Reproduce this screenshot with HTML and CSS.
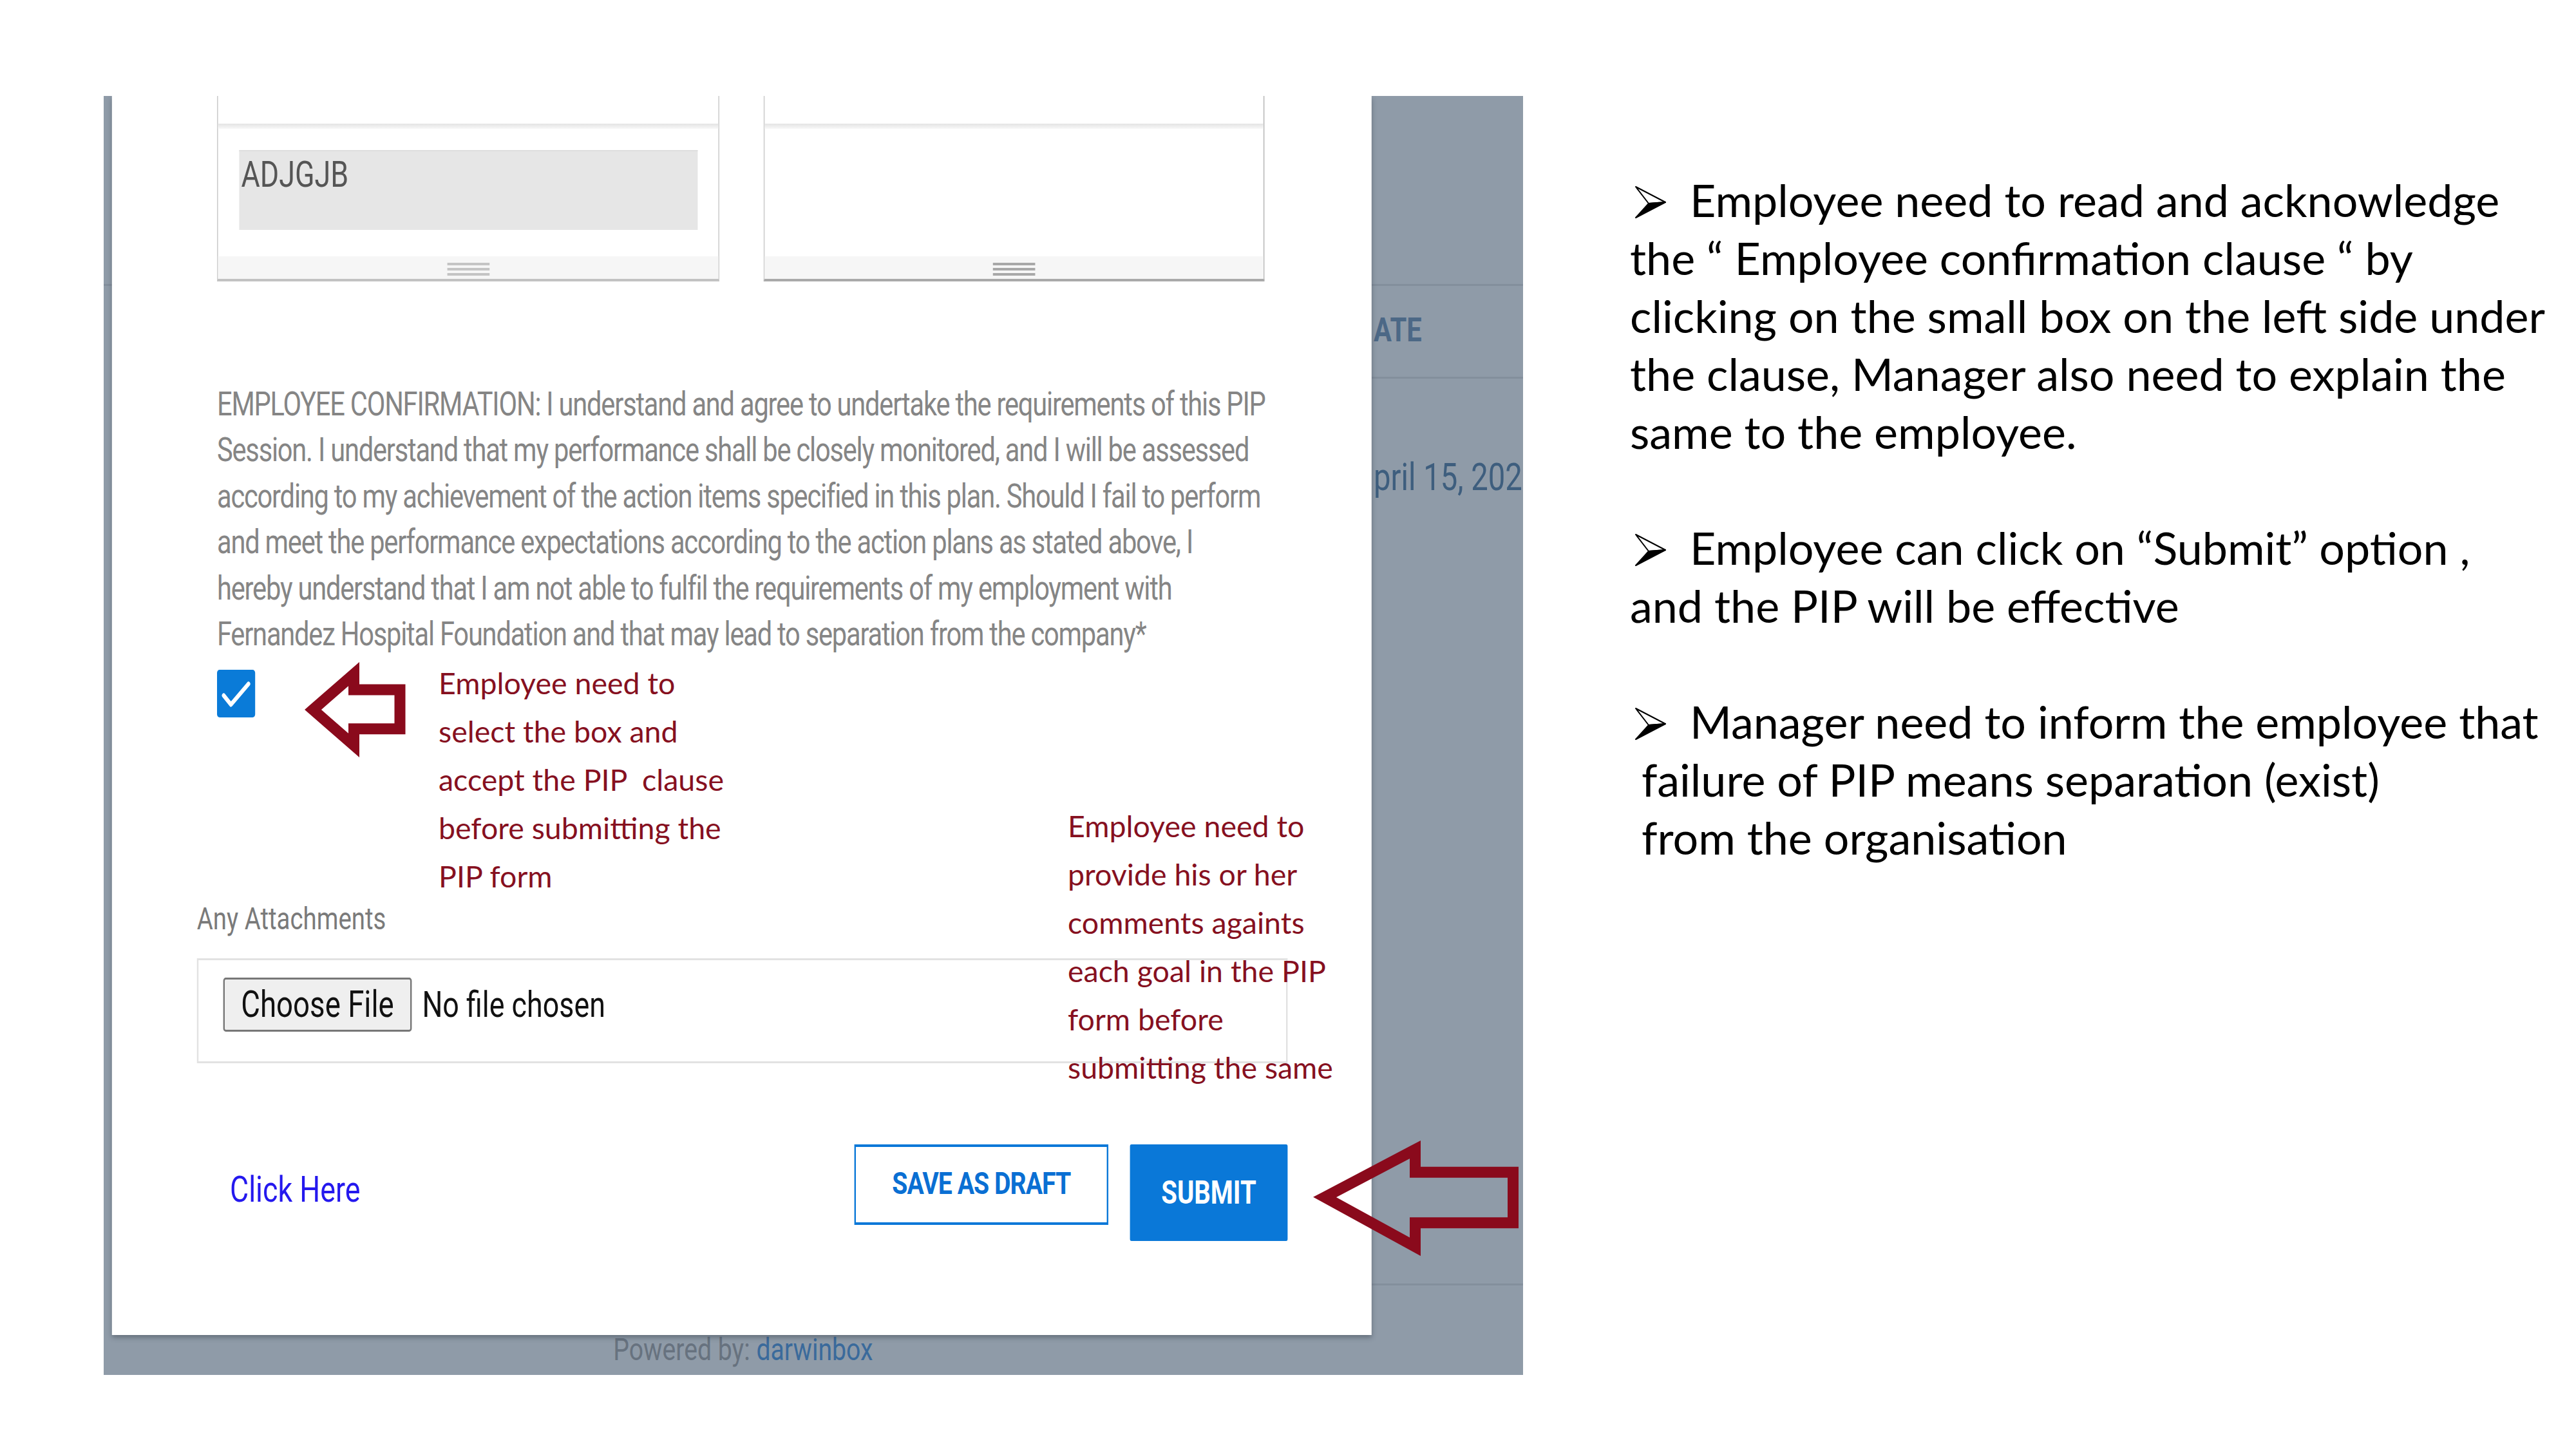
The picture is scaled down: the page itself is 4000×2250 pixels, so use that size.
FILE: index.html
```html
<!DOCTYPE html>
<html lang="en">
<head>
<meta charset="utf-8">
<title>PIP confirmation</title>
<link rel="stylesheet" href="styles.css">
</head>
<body>
<div class="slide">
  <div class="shot-frame">
    <div class="shot">
      <div class="strip"><div class="strip-line"></div></div>
      <div class="modal">
        <div class="areas">
          <div class="area">
            <div class="area-head"></div>
            <div class="area-band"></div>
            <div class="area-body"><div class="input">ADJGJB</div></div>
            <div class="grip"><span></span><span></span><span></span></div>
          </div>
          <div class="area area-2">
            <div class="area-head"></div>
            <div class="area-band"></div>
            <div class="area-body"></div>
            <div class="grip"><span></span><span></span><span></span></div>
          </div>
        </div>
        <p class="confirm">EMPLOYEE CONFIRMATION: I understand and agree to undertake the requirements of this PIP<br>Session. I understand that my performance shall be closely monitored, and I will be assessed<br>according to my achievement of the action items specified in this plan. Should I fail to perform<br>and meet the performance expectations according to the action plans as stated above, I<br>hereby understand that I am not able to fulfil the requirements of my employment with<br>Fernandez Hospital Foundation and that may lead to separation from the company*</p>
        <div class="check"><svg viewBox="0 0 74 74"><polyline points="13,40 27,54 61,22" fill="none" stroke="#fff" stroke-width="7" stroke-linecap="round" stroke-linejoin="round"/></svg></div>
        <div class="label">Any Attachments</div>
        <div class="filebox"><span class="choose">Choose File</span><span class="nofile">No file chosen</span></div>
        <div class="actions">
          <a class="link" href="#">Click Here</a>
          <span class="btn-draft">SAVE AS DRAFT</span>
          <span class="btn-submit">SUBMIT</span>
        </div>
      </div>
      <div class="side">
        <div class="th">ATE</div>
        <div class="td">pril 15, 2021</div>
      </div>
      <div class="footer">Powered by: <span>darwinbox</span></div>
    </div>
  </div>

  <div class="notes">
    <p><svg class="bullet" viewBox="0 0 48 50"><polygon points="1,1 47,25 21,27" fill="#fff" stroke="#000" stroke-width="2" stroke-linejoin="round"/><polygon points="21,27 47,25 1,49" fill="#000" stroke="#000" stroke-width="2" stroke-linejoin="round"/></svg>Employee need to read and acknowledge<br>the “ Employee confirmation clause “ by<br>clicking on the small box on the left side under<br>the clause, Manager also need to explain the<br>same to the employee.</p>
    <p><svg class="bullet" viewBox="0 0 48 50"><polygon points="1,1 47,25 21,27" fill="#fff" stroke="#000" stroke-width="2" stroke-linejoin="round"/><polygon points="21,27 47,25 1,49" fill="#000" stroke="#000" stroke-width="2" stroke-linejoin="round"/></svg>Employee can click on “Submit” option ,<br>and the PIP will be effective</p>
    <p><svg class="bullet" viewBox="0 0 48 50"><polygon points="1,1 47,25 21,27" fill="#fff" stroke="#000" stroke-width="2" stroke-linejoin="round"/><polygon points="21,27 47,25 1,49" fill="#000" stroke="#000" stroke-width="2" stroke-linejoin="round"/></svg>Manager need to inform the employee that<br>&nbsp;failure of PIP means separation (exist)<br>&nbsp;from the organisation</p>
  </div>

  <div class="ann ann-1">Employee need to<br>select the box and<br>accept the PIP&nbsp; clause<br>before submitting the<br>PIP form</div>
  <div class="ann ann-2">Employee need to<br>provide his or her<br>comments againts<br>each goal in the PIP<br>form before<br>submitting the same</div>

  <svg class="overlay" viewBox="0 0 4000 2250">
    <polygon points="486,1102 549.5,1046.7 549.5,1071 621,1071 621,1131.7 549.5,1131.7 549.5,1157.3" fill="none" stroke="#8a0a1c" stroke-width="17" stroke-linejoin="miter"/>
    <polygon points="2057,1859 2197.5,1785 2197.5,1820.3 2349.5,1820.3 2349.5,1898.8 2197.5,1898.8 2197.5,1936" fill="none" stroke="#8a0a1c" stroke-width="17" stroke-linejoin="miter"/>
  </svg>
</div>
</body>
</html>
```

FILE: styles.css
```css
* { box-sizing: border-box; }
html, body { margin: 0; padding: 0; background: #fff; }
body {
  width: 4000px;
  height: 2250px;
  overflow: hidden;
  font-family: Lato, "Liberation Sans", sans-serif;
}
.slide {
  position: relative;
  width: 4000px;
  height: 2250px;
  display: flex;
  align-items: flex-start;
}

/* ---------- squeezed screenshot ---------- */
.shot-frame {
  flex: none;
  width: 2204px;
  height: 1986px;
  margin: 149px 0 0 161px;
  overflow: hidden;
}
.shot {
  width: 2755px;
  height: 1986px;
  transform: scaleX(0.8);
  transform-origin: 0 0;
  background: #8f9ba8;
  display: grid;
  grid-template-columns: 16px 2445px 294px;
  grid-template-rows: 1924px 62px;
  font-family: Roboto, "Liberation Sans", sans-serif;
}
.strip-line { margin-top: 292px; border-top: 3px solid #838f9c; }

.modal {
  position: relative;
  z-index: 1;
  background: #fff;
  box-shadow: 0 4px 8px rgba(50, 60, 72, 0.45);
}
.areas { display: flex; gap: 86px; padding-left: 204px; }
.area {
  width: 975px;
  height: 288px;
  border-left: 2px solid #cdcdcd;
  border-right: 2px solid #cdcdcd;
  border-bottom: 4px solid #c2c2c2;
  display: flex;
  flex-direction: column;
}
.area-2 { width: 972px; border-bottom-color: #a9a9a9; border-right-color: #b9b9b9; }
.area-head { flex: none; height: 43px; }
.area-band { flex: none; height: 8px; background: linear-gradient(#e4e4e4, #f8f8f8); }
.area-body { flex: 1; padding: 33px 0 0 41px; }
.input {
  width: 890px;
  height: 124px;
  background: #e6e6e6;
  border-top: 2px solid #dedede;
  padding: 3px 0 0 4px;
  font-size: 56px;
  line-height: 66px;
  color: #555;
}
.grip {
  flex: none;
  height: 35px;
  background: #f6f6f6;
  display: flex;
  flex-direction: column;
  align-items: center;
  gap: 4.5px;
  padding-top: 10px;
}
.grip span { width: 82px; height: 3.5px; background: #c4c4c4; }
.area-2 .grip span { background: #a8a8a8; }

.confirm {
  margin: 155px 0 0 204px;
  font-size: 52px;
  line-height: 71.4px;
  letter-spacing: -1.5px;
  color: #858585;
  white-space: nowrap;
}
.check {
  margin: 20px 0 0 204px;
  width: 74px;
  height: 74px;
  background: #0a7bd8;
  border-radius: 5px;
}
.check svg { display: block; width: 74px; height: 74px; }
.label {
  margin: 287px 0 0 165px;
  font-size: 48px;
  line-height: 52px;
  color: #7a7a7a;
}
.filebox {
  margin: 35px 0 0 165px;
  width: 2117px;
  height: 163px;
  border: 3px solid #e2e2e2;
  display: flex;
  align-items: flex-start;
  padding: 27px 0 0 48px;
}
.choose {
  width: 366px;
  height: 84px;
  border: 3px solid #777;
  border-radius: 5px;
  background: #efefef;
  font-size: 57px;
  line-height: 78px;
  text-align: center;
  color: #111;
}
.nofile { margin-left: 20px; font-size: 56px; line-height: 84px; color: #111; }

.actions {
  margin-top: 126px;
  display: flex;
  align-items: flex-start;
  padding: 0 163px 0 229px;
}
.link {
  margin-top: 38px;
  font-size: 56px;
  line-height: 64px;
  color: #2418ee;
  text-decoration: none;
}
.btn-draft {
  margin-left: auto;
  width: 493px;
  height: 125px;
  border-style: solid;
  border-color: #0a78d8;
  border-width: 4px 3px;
  display: flex;
  align-items: center;
  justify-content: center;
  padding-bottom: 4px;
  font-weight: 700;
  font-size: 49px;
  letter-spacing: -1.2px;
  color: #0a6fd3;
}
.btn-submit {
  margin-left: 42px;
  width: 306px;
  height: 150px;
  background: #0a78d8;
  border-radius: 3px;
  display: flex;
  align-items: center;
  justify-content: center;
  font-weight: 700;
  font-size: 50px;
  color: #fff;
}

.side { display: flex; flex-direction: column; }
.th {
  margin-top: 292px;
  height: 147px;
  border-top: 3px solid #838f9c;
  border-bottom: 3px solid #838f9c;
  display: flex;
  align-items: center;
  padding: 0 0 4px 4px;
  font-weight: 700;
  font-size: 52px;
  color: #4c6886;
}
.td {
  height: 1408px;
  padding: 118px 0 0 4px;
  border-bottom: 3px solid #838f9c;
  font-size: 59px;
  line-height: 70px;
  color: #3e5e7e;
  white-space: nowrap;
}
.footer {
  grid-column: 1 / -1;
  margin-top: -5px;
  padding-left: 989px;
  font-size: 49px;
  line-height: 56px;
  color: #67727f;
  white-space: nowrap;
}
.footer span { color: #3a6a9b; }

/* ---------- notes column ---------- */
.notes {
  flex: none;
  margin: 265px 0 0 166px;
  font-size: 70px;
  line-height: 90px;
  color: #000;
  white-space: nowrap;
}
.notes p { margin: 0 0 90px; }
.bullet { width: 48px; height: 50px; margin: 0 37px 0 8px; vertical-align: -2px; }

/* ---------- slide annotations ---------- */
.ann {
  position: absolute;
  font-size: 46.5px;
  line-height: 75px;
  color: #86101f;
  white-space: nowrap;
}
.ann-1 { left: 681px; top: 1023px; }
.ann-2 { left: 1658px; top: 1245px; }
.overlay {
  position: absolute;
  left: 0;
  top: 0;
  width: 4000px;
  height: 2250px;
  pointer-events: none;
}
```
